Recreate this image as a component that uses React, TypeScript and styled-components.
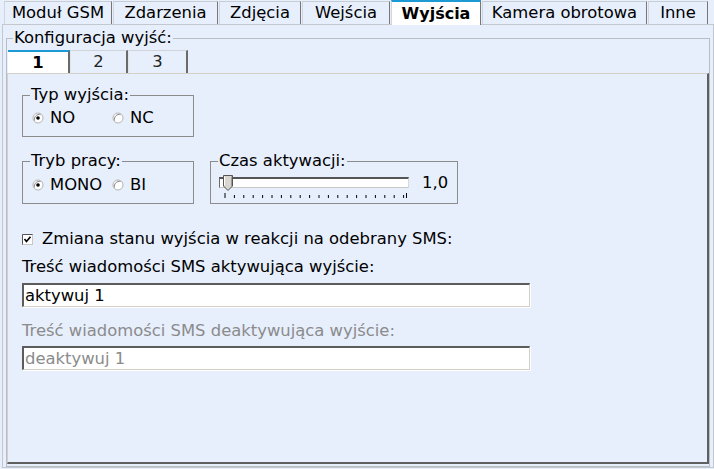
import React from 'react'
import styled, { createGlobalStyle, css } from 'styled-components'

const GlobalStyle = createGlobalStyle`
  html, body {
    margin: 0;
    padding: 0;
    background: #e7effd;
  }
  body {
    font-family: "DejaVu Sans", Verdana, sans-serif;
    font-size: 16.4px;
    line-height: 18px;
    color: #000;
  }
`

const Screen = styled.div`
  width: 714px;
  height: 469px;
  overflow: hidden;
  background: #e7effd;
`

const TabStrip = styled.div`
  display: flex;
  align-items: flex-end;
  height: 24px;
  padding-left: 4px;
  position: relative;
  z-index: 1;
`

const Tab = styled.div<{ $w: number; $active?: boolean }>`
  box-sizing: border-box;
  width: ${p => p.$w}px;
  height: 23px;
  display: flex;
  align-items: center;
  justify-content: center;
  background: #e7effd;
  border-top: 1px solid #c8ccd3;
  border-left: 1px solid #d2d6dc;
  border-right: 1px solid #767676;
  margin-right: 1px;
  white-space: nowrap;

  ${p =>
    p.$active &&
    css`
      height: 25px;
      margin-bottom: -1px;
      background: #fff;
      border-top: 2px solid #1c9ad6;
      font-weight: bold;
      font-size: 16px;
    `}
`

const Panel = styled.div`
  box-sizing: border-box;
  margin-left: 2px;
  width: 712px;
  height: 444px;
  border: 1px solid #c3c7ce;
  padding: 4px 3px 0 3px;
`

const ConfigGroup = styled.fieldset`
  margin: 0;
  padding: 3px 0 2px 0;
  border: 1px solid #b9bec6;
  min-width: 0;
`

const Legend = styled.legend<{ $indent: number }>`
  margin-left: ${p => p.$indent}px;
  padding: 0 1px;
  line-height: 18px;
`

const SubTabs = styled.div`
  display: flex;
  height: 23px;
  margin-left: 1px;
`

const SubTab = styled.div<{ $w: number; $active?: boolean }>`
  box-sizing: border-box;
  width: ${p => p.$w}px;
  display: flex;
  align-items: center;
  justify-content: center;
  border-top: 1px solid #d0d3d8;
  border-left: 1px solid #e2e4e8;
  border-right: 2px solid #6a6a6a;
  color: #222;

  ${p =>
    p.$active &&
    css`
      background: #fff;
      border-top: 2px solid #1c9ad6;
      border-left: none;
      color: #000;
      font-weight: bold;
    `}
`

const SubPanel = styled.div`
  box-sizing: border-box;
  height: 391px;
  border-top: 1px solid #d3d0c9;
  border-left: 1px solid #d3d0c9;
  border-right: 2px solid #5f5f5f;
  border-bottom: 2px solid #5f5f5f;
  padding: 12px 0 0 14px;
`

const Group = styled.fieldset<{ $w: number; $top: number; $bottom: number }>`
  box-sizing: border-box;
  width: ${p => p.$w}px;
  margin: 0;
  padding: ${p => p.$top}px 0 ${p => p.$bottom}px 0;
  border: 1px solid #8c8c8c;
  min-width: 0;
`

const GroupRow = styled.div`
  display: flex;
  gap: 16px;
  margin-top: 15px;
`

const RadioRow = styled.div`
  display: grid;
  grid-template-columns: 80px auto;
  height: 18px;
  padding-left: 9px;
`

const Choice = styled.label`
  display: flex;
  align-items: center;
  gap: 6px;
`

const SliderBox = styled.div`
  padding-left: 8px;
`

const SliderRow = styled.div`
  display: flex;
  align-items: center;
  height: 15px;
  gap: 13px;
`

const Track = styled.div`
  position: relative;
  box-sizing: border-box;
  width: 190px;
  height: 11px;
  background: #fff;
  border-top: 2px solid #555;
  border-left: 1px solid #6a6a6a;
  border-bottom: 1px solid #c8c8c8;
  border-right: 1px solid #d8d8d8;
`

const Thumb = styled.svg`
  position: absolute;
  left: 3px;
  top: -4px;
`

const Ticks = styled.svg`
  display: block;
  margin-top: 3px;
`

const CheckRow = styled.label`
  display: flex;
  align-items: center;
  gap: 9px;
  height: 18px;
  margin-top: 26px;
`

const FieldLabel = styled.div<{ $gap: number; $disabled?: boolean }>`
  margin-top: ${p => p.$gap}px;
  height: 18px;
  color: ${p => (p.$disabled ? '#8b8b8b' : '#000')};
`

const TextField = styled.input`
  display: block;
  box-sizing: border-box;
  width: 508px;
  height: 24px;
  margin: 7px 0 0 0;
  padding: 0 0 0 1px;
  font: inherit;
  line-height: 18px;
  color: #000;
  background: #fff;
  border-top: 2px solid #5c5c5c;
  border-left: 2px solid #5c5c5c;
  border-right: 1px solid #d4d0c8;
  border-bottom: 1px solid #d4d0c8;
  box-shadow: 1px 1px 0 #fff;
  outline: none;

  &:disabled {
    margin-top: 6px;
    color: #8b8b8b;
    -webkit-text-fill-color: #8b8b8b;
    background: #fff;
  }
`

const RadioMark = ({ on }: { on?: boolean }) => (
  <svg width="12" height="12" viewBox="0 0 12 12">
    <circle cx="6" cy="6" r="5" fill="#fff" stroke="#b4b4b4" />
    <path d="M2.5 8.5 A5 5 0 0 1 8.5 2.5" fill="none" stroke="#8a8a8a" />
    {on && <circle cx="6" cy="6" r="1.8" fill="#000" />}
  </svg>
)

const CheckMark = () => (
  <svg width="11" height="11" viewBox="0 0 11 11">
    <rect x="0.5" y="0.5" width="10" height="10" fill="#fff" stroke="#c8c8c8" />
    <path d="M0.5 10.5 V0.5 H10.5" fill="none" stroke="#555" />
    <path d="M2.5 5 L4.5 7.5 L8.5 2.8" fill="none" stroke="#000" strokeWidth="1.7" />
  </svg>
)

const tabs = [
  { label: 'Moduł GSM', w: 108 },
  { label: 'Zdarzenia', w: 105 },
  { label: 'Zdjęcia', w: 82 },
  { label: 'Wejścia', w: 88 },
  { label: 'Wyjścia', w: 90, active: true },
  { label: 'Kamera obrotowa', w: 165 },
  { label: 'Inne', w: 60 },
]

const tickXs = [...Array.from({ length: 20 }, (_, i) => 6 + i * 9.4), 187.5]

export default function App() {
  return (
    <Screen>
      <GlobalStyle />
      <TabStrip>
        {tabs.map(t => (
          <Tab key={t.label} $w={t.w} $active={t.active}>
            {t.label}
          </Tab>
        ))}
      </TabStrip>

      <Panel>
        <ConfigGroup>
          <Legend $indent={6}>Konfiguracja wyjść:</Legend>
          <SubTabs>
            <SubTab $w={62} $active>1</SubTab>
            <SubTab $w={58}>2</SubTab>
            <SubTab $w={60}>3</SubTab>
          </SubTabs>

          <SubPanel>
            <Group $w={172} $top={5} $bottom={9}>
              <Legend $indent={7}>Typ wyjścia:</Legend>
              <RadioRow>
                <Choice>
                  <RadioMark on />
                  NO
                </Choice>
                <Choice>
                  <RadioMark />
                  NC
                </Choice>
              </RadioRow>
            </Group>

            <GroupRow>
              <Group $w={172} $top={6} $bottom={9}>
                <Legend $indent={7}>Tryb pracy:</Legend>
                <RadioRow>
                  <Choice>
                    <RadioMark on />
                    MONO
                  </Choice>
                  <Choice>
                    <RadioMark />
                    BI
                  </Choice>
                </RadioRow>
              </Group>

              <Group $w={248} $top={5} $bottom={4}>
                <Legend $indent={7}>Czas aktywacji:</Legend>
                <SliderBox>
                  <SliderRow>
                    <Track>
                      <Thumb width="11" height="16" viewBox="0 0 11 16">
                        <path d="M0.5 0.5 H9.5 V11 L5 15.5 L0.5 11 Z" fill="#d9d6cf" stroke="#555" />
                        <path d="M1.5 1.5 V10.5" stroke="#fff" />
                        <path d="M8.5 1.5 V11" stroke="#9a9a9a" />
                      </Thumb>
                    </Track>
                    <span>1,0</span>
                  </SliderRow>
                  <Ticks width="190" height="6" viewBox="0 0 190 6">
                    {tickXs.map((x, i) => (
                      <line
                        key={i}
                        x1={x}
                        x2={x}
                        y1={i === 0 || i === tickXs.length - 1 ? 0 : 2}
                        y2={5}
                        stroke="#000"
                        strokeWidth="1"
                      />
                    ))}
                  </Ticks>
                </SliderBox>
              </Group>
            </GroupRow>

            <CheckRow>
              <CheckMark />
              Zmiana stanu wyjścia w reakcji na odebrany SMS:
            </CheckRow>

            <FieldLabel $gap={10}>Treść wiadomości SMS aktywująca wyjście:</FieldLabel>
            <TextField defaultValue="aktywuj 1" />

            <FieldLabel $gap={15} $disabled>
              Treść wiadomości SMS deaktywująca wyjście:
            </FieldLabel>
            <TextField defaultValue="deaktywuj 1" disabled />
          </SubPanel>
        </ConfigGroup>
      </Panel>
    </Screen>
  )
}
